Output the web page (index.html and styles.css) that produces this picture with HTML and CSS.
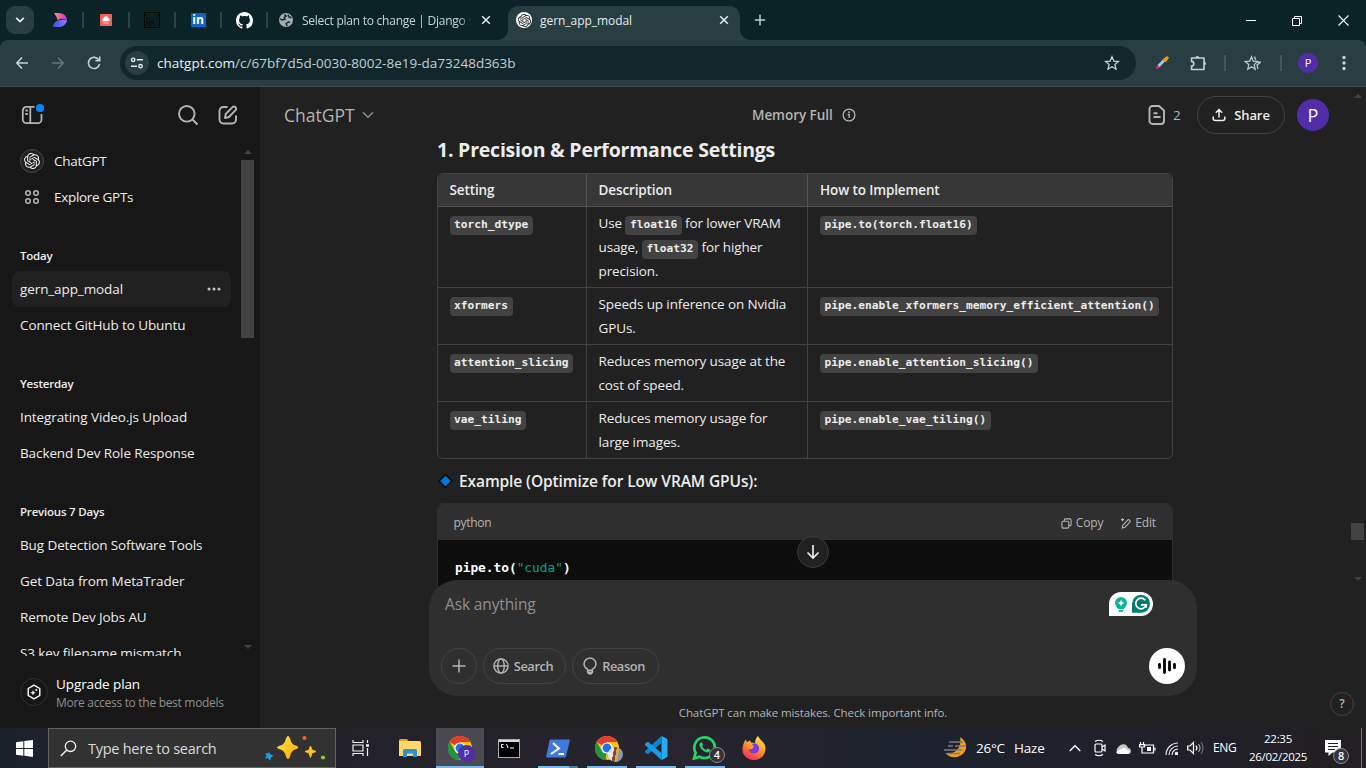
FILE: index.html
```html
<!DOCTYPE html>
<html lang="en">
<head>
<meta charset="utf-8">
<title>gern_app_modal</title>
<link rel="stylesheet" href="styles.css">
</head>
<body>
<svg class="defs" aria-hidden="true">
  <symbol id="openai" viewBox="0 0 24 24"><path fill="currentColor" d="M22.2819 9.8211a5.9847 5.9847 0 0 0-.5157-4.9108 6.0462 6.0462 0 0 0-6.5098-2.9A6.0651 6.0651 0 0 0 4.9807 4.1818a5.9847 5.9847 0 0 0-3.9977 2.9 6.0462 6.0462 0 0 0 .7427 7.0966 5.98 5.98 0 0 0 .511 4.9107 6.051 6.051 0 0 0 6.5146 2.9001A5.9847 5.9847 0 0 0 13.2599 24a6.0557 6.0557 0 0 0 5.7718-4.2058 5.9894 5.9894 0 0 0 3.9977-2.9001 6.0557 6.0557 0 0 0-.7475-7.0729zm-9.022 12.6081a4.4755 4.4755 0 0 1-2.8764-1.0408l.1419-.0804 4.7783-2.7582a.7948.7948 0 0 0 .3927-.6813v-6.7369l2.02 1.1686a.071.071 0 0 1 .038.052v5.5826a4.504 4.504 0 0 1-4.4945 4.4944zm-9.6607-4.1254a4.4708 4.4708 0 0 1-.5346-3.0137l.142.0852 4.783 2.7582a.7712.7712 0 0 0 .7806 0l5.8428-3.3685v2.3324a.0804.0804 0 0 1-.0332.0615L9.74 19.9502a4.4992 4.4992 0 0 1-6.1408-1.6464zM2.3408 7.8956a4.485 4.485 0 0 1 2.3655-1.9728V11.6a.7664.7664 0 0 0 .3879.6765l5.8144 3.3543-2.0201 1.1685a.0757.0757 0 0 1-.071 0l-4.8303-2.7865A4.504 4.504 0 0 1 2.3408 7.872zm16.5963 3.8558L13.1038 8.364 15.1192 7.2a.0757.0757 0 0 1 .071 0l4.8303 2.7913a4.4944 4.4944 0 0 1-.6765 8.1042v-5.6772a.79.79 0 0 0-.407-.667zm2.0107-3.0231l-.142-.0852-4.7735-2.7818a.7759.7759 0 0 0-.7854 0L9.409 9.2297V6.8974a.0662.0662 0 0 1 .0284-.0615l4.8303-2.7866a4.4992 4.4992 0 0 1 6.6802 4.66zM8.3065 12.863l-2.02-1.1638a.0804.0804 0 0 1-.038-.0567V6.0742a4.4992 4.4992 0 0 1 7.3757-3.4537l-.142.0805L8.704 5.459a.7948.7948 0 0 0-.3927.6813zm1.0976-2.3654l2.602-1.4998 2.6069 1.4998v2.9994l-2.5974 1.4997-2.6067-1.4997Z"/></symbol>
  <symbol id="chrome" viewBox="0 0 24 24"><circle cx="12" cy="12" r="12" fill="#fbc116"/><path d="M12 12 1.6 6A12 12 0 0 1 22.4 6H12z" fill="#e33b2e"/><path d="M1.6 6 8 17l4-1-2 8A12 12 0 0 1 1.6 6z" fill="#229342"/><path d="M1.6 6 12 24l-2-.2A12 12 0 0 1 1.6 6z" fill="#229342"/><circle cx="12" cy="12" r="5.6" fill="#fff"/><circle cx="12" cy="12" r="4.4" fill="#1a73e8"/></symbol>
  <symbol id="x" viewBox="0 0 10 10"><path d="M1.2 1.2l7.6 7.6M8.8 1.2 1.2 8.8" stroke="currentColor" stroke-width="1.5" fill="none"/></symbol>
</svg>

<header class="tabs">
  <button class="tabsearch"><svg width="10" height="8" viewBox="0 0 10 8"><path d="M1.2 1.8 5 5.6l3.8-3.8" fill="none" stroke="#e3eced" stroke-width="1.8"/></svg></button>
  <div class="pin"><svg width="14" height="16" viewBox="0 0 14 16"><defs><linearGradient id="g1" x1="0" x2="1"><stop offset="0" stop-color="#f8a05c"/><stop offset=".5" stop-color="#f0589a"/><stop offset="1" stop-color="#b23df0"/></linearGradient><linearGradient id="g2" x1="0" x2="1"><stop offset="0" stop-color="#3b4fe0"/><stop offset="1" stop-color="#8d7bff"/></linearGradient></defs><path d="M1 1h4.500C10.500 1 14 4 14 8.500 10.500 6 6 6.500 4.500 8.500 4.500 5 2 3 1 1z" fill="url(#g1)"/><path d="M0 14.500C0 9 9 5.500 14 8.500c-1 4-4 6.500-8 6.500H1z" fill="url(#g2)"/></svg></div>
  <div class="pin"><svg width="12" height="12" viewBox="0 0 12 12"><rect width="12" height="12" rx="1" fill="#f4645f"/><path d="M3.500 7.200a1.600 1.600 0 0 1 0-3 2.600 2.600 0 0 1 5 0 1.600 1.600 0 0 1 0 3z" fill="#fff"/><path d="M3 9h6" stroke="#fbb" /></svg></div>
  <div class="pin"><svg width="16" height="16" viewBox="0 0 16 16"><rect x=".5" y=".5" width="15" height="15" fill="#0c1f22" stroke="#040505"/><path d="M2 6.500h4M2 9h7M2 11h9M2 13h6" stroke="#060a0b"/></svg></div>
  <div class="pin"><span class="linkedin">in</span></div>
  <div class="pin"><svg width="17" height="17" viewBox="0 0 16 16"><path fill="#fff" d="M8 0C3.580 0 0 3.580 0 8c0 3.540 2.290 6.530 5.470 7.590.4.070.55-.17.55-.38 0-.19-.01-.82-.01-1.490-2.010.37-2.530-.49-2.690-.94-.09-.23-.48-.94-.82-1.130-.28-.15-.68-.52-.01-.53.63-.01 1.080.58 1.230.82.72 1.210 1.870.87 2.330.66.07-.52.28-.87.51-1.070-1.780-.2-3.640-.89-3.640-3.950 0-.87.31-1.590.82-2.150-.08-.2-.36-1.020.08-2.120 0 0 .67-.21 2.200.82.64-.18 1.320-.27 2-.27s1.360.09 2 .27c1.530-1.040 2.200-.82 2.200-.82.44 1.100.16 1.920.08 2.120.51.56.82 1.270.82 2.150 0 3.070-1.870 3.750-3.650 3.950.29.25.54.73.54 1.480 0 1.070-.01 1.930-.01 2.200 0 .21.15.46.55.38A8.010 8.010 0 0 0 16 8c0-4.420-3.580-8-8-8z"/></svg></div>
  <div class="tab"><svg width="14" height="14" viewBox="0 0 14 14"><circle cx="7" cy="7" r="7" fill="#a2acaf"/><path d="M5.500 1.500 7 3.200 5.200 4.500 6 6.300 3.600 7 1.200 6M8 13l-.8-2.400L9.300 9 11 9.500M9 1.700l1 2.300 2.500.5" fill="none" stroke="#15292d" stroke-width="1.500"/></svg><span class="tabname t-dj">Select plan to change | Django s</span><svg class="close" width="10" height="10"><use href="#x"/></svg></div>
  <div class="tab active"><span class="fav"><svg width="13" height="13"><use href="#openai"/></svg></span><span class="tabname">gern_app_modal</span><svg class="close" width="10" height="10"><use href="#x"/></svg></div>
  <svg class="plus" width="12" height="12" viewBox="0 0 12 12"><path d="M6 .8v10.400M.8 6h10.400" stroke="#b9d0d3" stroke-width="1.500"/></svg>
  <div class="winctl">
    <svg width="10" height="11" viewBox="0 0 10 11"><path d="M0 5.500h10" stroke="#fff"/></svg>
    <svg width="10" height="11" viewBox="0 0 10 11"><path d="M.5 3.500h7v7h-7zM2.500 3.500v-2h7v7h-2" fill="none" stroke="#fff"/></svg>
    <svg width="11" height="11" viewBox="0 0 11 11"><path d="M.5.5l10 10M10.500.5l-10 10" stroke="#fff" stroke-width="1.100"/></svg>
  </div>
</header>

<nav class="toolbar">
  <svg width="36" height="16" viewBox="-12 0 36 16"><path d="M12 8H1M6 2.500.8 8 6 13.500" fill="none" stroke="#c3d3d6" stroke-width="1.600"/></svg>
  <svg width="36" height="16" viewBox="-12 0 36 16"><path d="M0 8h11M6 2.500 11.200 8 6 13.500" fill="none" stroke="#66777b" stroke-width="1.600"/></svg>
  <svg width="36" height="16" viewBox="-12 0 36 16"><path d="M10.800 5A5.600 5.600 0 1 0 11.500 9M11.700 1.500v4.300H7.400" fill="none" stroke="#c3d3d6" stroke-width="1.600"/></svg>
  <div class="omni">
    <span class="site"><svg width="14" height="14" viewBox="0 0 14 14" fill="none" stroke="#e3eced" stroke-width="1.400"><circle cx="3.200" cy="3.800" r="1.700"/><path d="M6.800 3.800H13M1 10.200h6"/><circle cx="10.500" cy="10.200" r="1.700"/></svg></span>
    <span class="url"><b>chatgpt.com</b>/c/67bf7d5d-0030-8002-8e19-da73248d363b</span>
    <svg class="bm" width="16" height="16" viewBox="0 0 16 16"><path d="m8 1.700 1.800 4.400 4.700.4-3.600 3.100 1.100 4.600L8 11.700l-4 2.500 1.100-4.600L1.500 6.500l4.700-.4z" fill="none" stroke="#c3d3d6" stroke-width="1.300"/></svg>
  </div>
  <div class="exts">
    <svg width="14" height="14" viewBox="0 0 14 14"><path d="M1.500 12.500 5 9" stroke="#e91e63" stroke-width="2.800"/><path d="M3.500 10 9 4.500" stroke="#8fd0f5" stroke-width="2.800"/><path d="M8 3.500 10.500 6 13.500 1.800 12.300.5z" fill="#ff9800" stroke="#ff9800"/></svg>
    <svg class="e2" width="17" height="17" viewBox="0 0 17 17"><path d="M1.500 3H14v11.500H1.500V11a2.300 2.300 0 0 0 0-4.600z" fill="none" stroke="#c3d3d6" stroke-width="1.600" stroke-linejoin="round"/><path d="M5.500 3a1.900 1.900 0 0 1 3.800 0zM14 6.500a1.900 1.900 0 0 1 0 3.800z" fill="#c3d3d6"/></svg>
    <i class="bar"></i>
    <svg class="e3" width="17" height="16" viewBox="0 0 17 16"><path d="m7.500 1.700 1.700 4.400 4.300.4-3.300 3.100 1 4.600-3.700-2.500-3.700 2.500 1-4.600L1 6.500l4.800-.4zM10.500 1.500l1.200 3.500M12.500 6.800l4 .4-3.500 2.900 1 3.900" fill="none" stroke="#b9c9cc" stroke-width="1.300"/></svg>
    <i class="bar"></i>
    <span class="ava small">P</span>
    <svg class="e4" width="4" height="16" viewBox="0 0 4 16" fill="#c3d3d6"><circle cx="2" cy="2.500" r="1.700"/><circle cx="2" cy="8" r="1.700"/><circle cx="2" cy="13.500" r="1.700"/></svg>
  </div>
</nav>

<main class="page">
  <aside class="side">
    <div class="sidehead">
      <svg width="24" height="24" viewBox="0 0 24 24"><path d="M14.500 3.900H6.500a3.700 3.700 0 0 0-3.700 3.700v8.800a3.700 3.700 0 0 0 3.700 3.700h11.300a3.700 3.700 0 0 0 3.700-3.700V11M10.300 3.900v16.200M5.300 7.500h2.500M5.300 11h2.500" fill="none" stroke="#b4b4b4" stroke-width="1.800"/><circle cx="20" cy="5" r="4.100" fill="#0285ff"/></svg>
      <svg class="s2" width="22" height="22" viewBox="0 0 22 22"><circle cx="9.800" cy="9.800" r="7.800" fill="none" stroke="#b4b4b4" stroke-width="1.900"/><path d="m15.500 15.500 5 5" stroke="#b4b4b4" stroke-width="1.900"/></svg>
      <svg width="20" height="20" viewBox="0 0 20 20"><path d="M9.500 2H5.500A4 4 0 0 0 1.500 6v8.500a4 4 0 0 0 4 4H14a4 4 0 0 0 4-4V10.500M7 13l.7-4L14.500 2.200a2 2 0 0 1 3 0 2 2 0 0 1 0 3L11 12z" fill="none" stroke="#b4b4b4" stroke-width="1.900" stroke-linejoin="round"/></svg>
    </div>
    <div class="history">
      <div class="row nav"><span class="gptring"><svg width="16" height="16"><use href="#openai"/></svg></span>ChatGPT</div>
      <div class="row nav"><span class="ic"><svg width="16" height="16" viewBox="0 0 16 16" fill="none" stroke="#b4b4b4" stroke-width="1.500"><circle cx="4" cy="4" r="2.300"/><circle cx="12" cy="4" r="2.300"/><circle cx="4" cy="12" r="2.300"/><circle cx="12" cy="12" r="2.300"/></svg></span>Explore GPTs</div>
      <h3>Today</h3>
      <div class="row sel">gern_app_modal<svg width="14" height="4" viewBox="0 0 14 4" fill="#c4c4c4"><circle cx="2" cy="2" r="1.500"/><circle cx="7" cy="2" r="1.500"/><circle cx="12" cy="2" r="1.500"/></svg></div>
      <div class="row">Connect GitHub to Ubuntu</div>
      <h3>Yesterday</h3>
      <div class="row">Integrating Video.js Upload</div>
      <div class="row">Backend Dev Role Response</div>
      <h3>Previous 7 Days</h3>
      <div class="row">Bug Detection Software Tools</div>
      <div class="row">Get Data from MetaTrader</div>
      <div class="row">Remote Dev Jobs AU</div>
      <div class="row">S3 key filename mismatch</div>
      <div class="sbar"><i class="up"></i><i class="thumb"></i><i class="down"></i></div>
    </div>
    <div class="upgrade">
      <span class="upic"><svg width="16" height="16" viewBox="0 0 16 16"><path d="M8 1.200 13.800 4.500v7L8 14.800 2.200 11.500v-7z" fill="none" stroke="#fff" stroke-width="1.400" stroke-linejoin="round"/><path d="M7 6l.8 2 2 .8-2 .8L7 11.600l-.8-2-2-.8 2-.8zM10.300 4.300l.4 1.200 1.200.5-1.200.4-.4 1.200-.5-1.200-1.200-.4 1.200-.5z" fill="#fff"/></svg></span>
      <div><p class="u1">Upgrade plan</p><p class="u2">More access to the best models</p></div>
    </div>
  </aside>

  <section class="chat">
    <div class="chathead">
      <span class="model">ChatGPT</span><svg class="chev" width="12" height="8" viewBox="0 0 12 8"><path d="m1 1.300 5 5 5-5" fill="none" stroke="#8f8f8f" stroke-width="1.500"/></svg>
      <span class="mem">Memory Full</span><svg width="14" height="14" viewBox="0 0 14 14"><circle cx="7" cy="7" r="5.900" fill="none" stroke="#b4b4b4" stroke-width="1.300"/><path d="M5.600 6.500H7.200v3.500" fill="none" stroke="#b4b4b4" stroke-width="1.300"/><circle cx="7" cy="4.200" r=".9" fill="#b4b4b4"/></svg>
      <div class="headright">
        <svg width="18" height="20" viewBox="0 0 18 20"><path d="M4.500 1h6.500L16 5.500V16a3 3 0 0 1-3 3H4.500a3 3 0 0 1-3-3V4a3 3 0 0 1 3-3zM5.500 8.200h4M5.500 12h7" fill="none" stroke="#b4b4b4" stroke-width="1.900" stroke-linejoin="round"/></svg><span class="two">2</span>
        <button class="share"><svg width="14" height="14" viewBox="0 0 14 14"><path d="M7 9.500V2M3.800 4.800 7 1.600l3.200 3.200M1.200 8.500v2a2 2 0 0 0 2 2h7.600a2 2 0 0 0 2-2v-2" fill="none" stroke="#ececec" stroke-width="1.500"/></svg>Share</button>
        <span class="ava">P</span>
      </div>
    </div>

    <div class="thread">
      <h2>1. Precision &amp; Performance Settings</h2>
      <table>
        <colgroup><col class="c1"><col class="c2"><col></colgroup>
        <tr><th>Setting</th><th>Description</th><th>How to Implement</th></tr>
        <tr><td><code>torch_dtype</code></td><td>Use <code>float16</code> for lower VRAM<br>usage, <code>float32</code> for higher<br>precision.</td><td><code>pipe.to(torch.float16)</code></td></tr>
        <tr><td><code>xformers</code></td><td>Speeds up inference on Nvidia<br>GPUs.</td><td><code>pipe.enable_xformers_memory_efficient_attention()</code></td></tr>
        <tr><td><code>attention_slicing</code></td><td>Reduces memory usage at the<br>cost of speed.</td><td><code>pipe.enable_attention_slicing()</code></td></tr>
        <tr><td><code>vae_tiling</code></td><td>Reduces memory usage for<br>large images.</td><td><code>pipe.enable_vae_tiling()</code></td></tr>
      </table>
      <p class="ex"><svg width="16" height="16" viewBox="0 0 16 16"><path d="M8.500 1.600 14.900 8 8.500 14.400 2.100 8z" fill="#0078d7" stroke="#0b0b0b" stroke-width="1.500"/></svg>Example (Optimize for Low VRAM GPUs):</p>
      <div class="codeblock">
        <div class="codehead"><span class="lang">python</span>
          <svg class="cp" width="11" height="11" viewBox="0 0 12 12"><path d="M3.500 3V2.500a1.500 1.500 0 0 1 1.500-1.500h4.500A1.500 1.500 0 0 1 11 2.500V7a1.500 1.500 0 0 1-1.500 1.500H9M2.500 3.500H7A1.500 1.500 0 0 1 8.500 5v4.500A1.500 1.500 0 0 1 7 11H2.500A1.500 1.500 0 0 1 1 9.500V5a1.500 1.500 0 0 1 1.500-1.500z" fill="none" stroke="#b4b4b4" stroke-width="1.200"/></svg><span class="cpt">Copy</span>
          <svg class="ed" width="11" height="11" viewBox="0 0 12 12"><path d="m3 8 5-5.500a1.600 1.600 0 0 1 2.500 2.200L5.500 10l-3 .8zM1 1.800h3.500M2.700 0v3.500" fill="none" stroke="#b4b4b4" stroke-width="1.200"/></svg><span>Edit</span></div>
        <pre>pipe.to(<span>"cuda"</span>)</pre>
      </div>
    </div>

    <div class="composer">
      <button class="down"><svg width="14" height="16" viewBox="0 0 14 16"><path d="M7 1v13M1.500 8.500 7 14l5.500-5.500" fill="none" stroke="#ececec" stroke-width="1.700"/></svg></button>
      <div class="ask"><span>Ask anything</span>
        <svg width="44" height="24" viewBox="0 0 44 24"><path d="M0 24V12A12 12 0 0 1 12 0H32a12 12 0 0 1 0 24z" fill="#fff"/><circle cx="12" cy="11" r="6" fill="#0bb59b"/><path d="M9 14h6v3H9zM9.200 18h5.600l-1 1.800h-3.600z" fill="#0bb59b"/><path d="m12 7.500 1 2.500 2.500 1-2.500 1-1 2.500L11 12l-2.500-1 2.500-1z" fill="#fff"/><path d="M23 20.800V12a9 9 0 1 1 9 8.800z" fill="#027e6f"/><path d="M36.200 8.200A5.300 5.300 0 1 0 37.200 12.800H32M37.200 12.500v3.300" fill="none" stroke="#fff" stroke-width="1.700"/></svg>
      </div>
      <div class="tools">
        <button class="pill round"><svg width="14" height="14" viewBox="0 0 14 14"><path d="M7 .5v13M.5 7h13" stroke="#b4b4b4" stroke-width="1.500"/></svg></button>
        <button class="pill p1"><svg width="16" height="16" viewBox="0 0 16 16" fill="none" stroke="#b4b4b4" stroke-width="1.400"><circle cx="8" cy="8" r="7.100"/><ellipse cx="8" cy="8" rx="3.300" ry="7.100"/><path d="M1 8h14"/></svg>Search</button>
        <button class="pill p2"><svg width="14" height="18" viewBox="0 0 14 18" fill="none" stroke="#b4b4b4" stroke-width="1.500"><path d="M4.500 12.300A5.900 5.900 0 1 1 9.500 12.300V14a2.500 2.500 0 0 1-5 0zM4.500 13.300h5"/><path d="M5 15.300h4l-1 1.500H6z" fill="#b4b4b4"/></svg>Reason</button>
        <button class="voice"><svg width="18" height="16" viewBox="0 0 18 16"><path d="M1.500 6.300v3.400M6.500 1.500v13M11.500 4v8M16.500 6.300v3.400" stroke="#000" stroke-width="2.800" stroke-linecap="round"/></svg></button>
      </div>
    </div>
    <p class="foot">ChatGPT can make mistakes. Check important info.</p>
    <span class="help">?</span>
  </section>
  <div class="vscroll"><i class="up"></i><i class="vthumb"></i><i class="down"></i></div>
</main>

<footer class="task">
  <div class="start"><svg width="17" height="17" viewBox="0 0 17 17"><path d="M0 2.300 7.300 1.200V8H0zM8.300 1.100 17 0v8H8.300zM0 9h7.300v6.800L0 14.700zM8.300 9H17v8l-8.700-1.200z" fill="#fff"/></svg></div>
  <div class="tsearch"><svg width="17" height="17" viewBox="0 0 17 17"><circle cx="10.500" cy="6.300" r="5.200" fill="none" stroke="#f2f2f2" stroke-width="1.300"/><path d="M6.800 10 .8 16" stroke="#f2f2f2" stroke-width="1.400"/></svg><span>Type here to search</span>
    <svg class="spark" width="62" height="26" viewBox="0 0 62 26"><defs><linearGradient id="gs" x2="1" y2="1"><stop offset="0" stop-color="#ffe24a"/><stop offset="1" stop-color="#f8a80c"/></linearGradient></defs><path d="M24 1q1.500 0 3 5.500Q28.500 10 33 11q2.500 1 0 3-4.500.8-6 4.500-1.500 5.500-3 5.500t-3-5.500Q19.500 15 15 14q-4-1.500 0-3 4.500-1 6-4.500Q22.500 1 24 1z" fill="url(#gs)"/><path d="m46.500 11 1.500 4 4 1.500-4 1.500-1.500 4.500-1.500-4.500-4-1.500 4-1.500z" fill="url(#gs)" stroke="#fbc21b"/><path d="m5 17 1.500 2.500 3 1-2.500 2-.8 3L4 23.300l-3 .2 1.500-2.800-1.200-2.800 3 .7z" fill="#12a4ea"/><circle cx="40.500" cy="3" r="2.100" fill="#f0622a"/><circle cx="59" cy="22.500" r="2.100" fill="#8bc83f"/></svg></div>
  <div class="slot tv"><svg width="17" height="16" viewBox="0 0 17 16" fill="none" stroke="#f2f2f2" stroke-width="1.200"><path d="M1 0v2.500h10V0M1 5h10v6H1zM1 16v-2.500h10V16M15.500 0v3M15.500 8v8"/><path d="M14 5.500h3" stroke-width="2.500"/></svg></div>
  <div class="slot ex1"><svg width="22" height="18" viewBox="0 0 22 18"><path d="M0 1.500A1.500 1.500 0 0 1 1.500 0H8l2 2.500H0z" fill="#e4a50f"/><path d="M0 2h20.500A1.500 1.500 0 0 1 22 3.500V17H0z" fill="#ffd766"/><path d="M4 18v-6.500A1.500 1.500 0 0 1 5.500 10h11a1.500 1.500 0 0 1 1.500 1.500V18h-4v-3.500H8V18z" fill="#2f8fd8"/></svg></div>
  <div class="slot on"><svg width="24" height="24"><use href="#chrome"/></svg><span class="ava tiny">P</span></div>
  <div class="slot"><svg width="22" height="19" viewBox="0 0 22 19"><rect x=".5" y=".5" width="21" height="18" fill="#000" stroke="#a9adb0"/><path d="M1 2h20" stroke="#d6d9da" stroke-width="2"/><path d="M5.500 5.500h-2v3h2M7 6v.1M7 8v.1M8.500 5l1.500 4M12 9h4" stroke="#fff" fill="none"/></svg></div>
  <div class="slot run multi"><svg width="24" height="19" viewBox="0 0 24 19"><path d="M4.500.5H23a.8.8 0 0 1 .8 1L20 17.500a1.300 1.300 0 0 1-1.300 1H1a.8.8 0 0 1-.8-1L3.500 1.500a1.300 1.300 0 0 1 1-1z" fill="#3f79dd"/><path d="m7 4 6 5.500-8 5.500M12.500 15H18" fill="none" stroke="#fff" stroke-width="2"/></svg></div>
  <div class="slot run"><svg width="24" height="24"><use href="#chrome"/></svg><span class="person"></span></div>
  <div class="slot run"><svg width="24" height="24" viewBox="0 0 24 24"><path d="m17.500 0 6 3v18l-6 3z" fill="#29a9f1"/><path d="M17.500 0v7L4 18.200 1 16.500V15z" fill="#0b84cf"/><path d="M17.500 24v-7L4 5.800 1 7.500V9z" fill="#1a9be6"/></svg></div>
  <div class="slot run"><svg width="25" height="24" viewBox="0 0 25 24"><path d="m2 22.500 1.600-5.800a10.300 10.300 0 1 1 4 4z" fill="none" stroke="#27d366" stroke-width="2.700"/><path d="M8.700 6.500c.8-.6 1.400-.2 1.700.7l.6 1.500c.1.500-.6 1.200-.9 1.600 1 1.700 2.300 2.900 4.100 3.600l1.200-1.400c.5-.4 2.600.8 2.900 1.100.3.700-.7 2.800-2.600 2.900-3.300.1-7.900-4-8.300-7.200 0-1.200.7-2.300 1.300-2.800z" fill="#27d366"/></svg><span class="badge four">4</span></div>
  <div class="slot"><svg width="24" height="24" viewBox="0 0 24 24"><defs><linearGradient id="ff" x1=".8" y1="0" x2=".3" y2="1"><stop offset="0" stop-color="#fff04a"/><stop offset=".5" stop-color="#ff9322"/><stop offset="1" stop-color="#f5265c"/></linearGradient></defs><path d="M16 0c1 3 6 6 7 9.500 2 7-2.500 14-10.500 14.500C5 24 0 19 .5 12.500.8 8 2.500 6 3.500 3.500L5 6l3-1.500 1 2 4 .5C13 4 14 2 16 0z" fill="url(#ff)"/><path d="M9 8.500c5-2.500 8.500.5 8 5-.5 3.500-5.500 5.500-8.500 3-1.800-1.500-1.500-3-1-3.500 1.500.5 3 0 4-1.500L8 10z" fill="#7a3be0"/><path d="M5 6.500 9 7l3 3.500c-1.500 2-3 2.500-4.500 2.500L4.500 10z" fill="#ff9a2a"/></svg></div>
  <div class="tray">
    <svg class="moon" width="24" height="22" viewBox="0 0 24 22"><path d="M16 0c6 4 8 9 4.500 15-4 6-14 7.500-19 1 7 2 17-3 14.500-16z" fill="#f59a1b"/><path d="M5 5h14M4 9h5M11 9h11M0 13h18M3 16.500h13" stroke="#7b7d82" stroke-width="1.700"/></svg>
    <span class="temp">26°C</span><span class="haze">Haze</span>
    <svg class="t1" width="12" height="8" viewBox="0 0 12 8"><path d="m.7 7 5.300-5.300L11.300 7" fill="none" stroke="#fff" stroke-width="1.300"/></svg>
    <svg class="t2" width="13" height="18" viewBox="0 0 13 18" fill="none" stroke="#fff" stroke-width="1.200"><rect x="2" y="5" width="7" height="8" rx="1"/><path d="M9 8l3-2v6L9 10M2 2.500q4-2.500 8 0M2 15.500q4 2.500 8 0"/></svg>
    <svg class="t3" width="16" height="11" viewBox="0 0 16 11"><path d="M4 11a4 4 0 0 1-.5-7A5.200 5.200 0 0 1 13 5a3 3 0 0 1-.3 6z" fill="#c9c9c9"/><path d="M1 9 9 4.500 15.500 9A3 3 0 0 1 12.700 11H4a4 4 0 0 1-3-2z" fill="#fff"/></svg>
    <svg class="t4" width="17" height="14" viewBox="0 0 17 14"><path d="M6 4h8.500v8H5M16 6.500v3M1.500 4.500V1M4.500 4.500V1M.5 3.500h5v2.500H.5zM3 6v6H5" fill="none" stroke="#fff" stroke-width="1.200"/><rect x="8" y="6" width="4" height="4" fill="#fff"/></svg>
    <svg class="t5" width="13" height="13" viewBox="0 0 13 13" fill="none" stroke="#e8e8e8" stroke-width="1.200"><path d="M1 13A12 12 0 0 1 13 1M4 13a9 9 0 0 1 9-9M7 13a6 6 0 0 1 6-6" /><circle cx="11.500" cy="11.500" r="1.200" fill="#fff"/></svg>
    <svg class="t6" width="17" height="14" viewBox="0 0 17 14" fill="none" stroke="#fff" stroke-width="1.200"><path d="M.7 5H3l3.500-3.500v11L3 9H.7zM9 4.700q1.800 2.300 0 4.600"/><path d="M11.500 3q3 4 0 8" stroke="#a5a5a8"/><path d="M14 1q4 6 0 12" stroke="#6b6b70"/></svg>
    <span class="eng">ENG</span>
    <div class="clock"><span>22:35</span><span class="date">26/02/2025</span></div>
    <div class="note"><svg width="16" height="17" viewBox="0 0 16 17"><path d="M0 0h16v12.500H7.500L3.500 16v-3.500H0z" fill="#fff"/><path d="M3 3.500h10M3 6.500h10M3 9.500h7" stroke="#222129"/></svg><span class="badge">8</span></div>
    <i class="desk"></i>
  </div>
</footer>
</body>
</html>
```
FILE: styles.css
```css
* { box-sizing: border-box; }
body { margin: 0; width: 1366px; height: 768px; overflow: hidden; display: flex; flex-direction: column; background: #212121; font: 13px/20px "Open Sans", "Noto Sans", sans-serif; color: #ececec; white-space: nowrap; }
p, h2, h3, pre { margin: 0; }
button { font: inherit; color: inherit; background: none; border: 0; padding: 0; display: flex; align-items: center; justify-content: center; }
svg { flex: none; display: block; }
.defs { position: absolute; width: 0; height: 0; }

/* tab strip */
.tabs { position: relative; height: 40px; flex: none; background: #0b2327; display: flex; align-items: center; }
.tabsearch { width: 28px; height: 28px; margin: 0 4px 0 6px; border-radius: 9px; background: #293e43; }
.pin { width: 46px; height: 16px; border-right: 2px solid #2b4146; display: flex; align-items: center; justify-content: center; }
.linkedin { width: 15px; height: 14px; border-radius: 1px; background: #0a66c2; color: #fff; font: bold 12px/14px "Open Sans", sans-serif; text-align: center; }
.tab { width: 240px; height: 34px; padding: 0 17px 0 11px; display: flex; align-items: center; color: #c5d6d8; font-size: 12px; }
.tabname { flex: 1; min-width: 0; margin-left: 8px; padding-top: 1px; letter-spacing: -.28px; }
.t-dj { overflow: hidden; letter-spacing: -.25px; -webkit-mask-image: linear-gradient(90deg, #000 92%, transparent 99%); mask-image: linear-gradient(90deg, #000 92%, transparent 99%); margin-right: 8px; margin-left: 9px; }
.tab .close { color: #e3eced; }
.active { position: relative; z-index: 1; align-self: flex-end; width: 232px; padding: 0 11px 6px 8px; border-radius: 10px 10px 0 0; background: #293e43; color: #e3eced; }
.active .tabname { letter-spacing: -.05px; }
.active::before, .active::after { content: ""; position: absolute; bottom: 0; width: 10px; height: 10px; }
.active::before { left: -10px; background: radial-gradient(circle at 0 0, transparent 9.500px, #293e43 10px); }
.active::after { right: -10px; background: radial-gradient(circle at 100% 0, transparent 9.500px, #293e43 10px); }
.fav { width: 16px; height: 16px; border-radius: 50%; background: #fff; color: #222; display: flex; align-items: center; justify-content: center; }
.plus { margin-left: 14px; }
.winctl { margin-left: auto; padding-right: 17px; display: flex; gap: 36px; }

/* toolbar */
.toolbar { height: 47px; flex: none; display: flex; align-items: center; padding-left: 4px; background: #293e43; border-bottom: 1px solid #3c4c50; border-radius: 8px 8px 0 0; box-shadow: 0 -8px 0 #0b2327; }
.omni { width: 1016px; height: 34px; margin-left: 8px; padding: 0 16px 0 5px; border-radius: 17px; background: #12272c; display: flex; align-items: center; }
.site { width: 24px; height: 24px; border-radius: 50%; background: #293e43; display: flex; align-items: center; justify-content: center; }
.url { margin-left: 8px; flex: 1; font-size: 13.500px; letter-spacing: 0; color: #c3cfd1; }
.url b { font-weight: 400; color: #e8f0f1; }
.exts { flex: 1; display: flex; align-items: center; padding-left: 19px; }
.e2 { margin: 0 17px 0 21px; }
.e3 { margin: 0 19px 0 18px; }
.e4 { margin-left: 24px; }
.bar { width: 2px; height: 16px; background: #43585d; }
.ava { width: 32px; height: 32px; border-radius: 50%; background: #512da8; color: #fff; font: 18px/32px "Open Sans", sans-serif; text-align: center; }
.ava.small { width: 20px; height: 20px; margin-left: 16px; font-size: 11px; line-height: 20px; }

/* page */
.page { flex: 1; min-height: 0; display: flex; }
.side { width: 260px; flex: none; background: #171717; display: flex; flex-direction: column; }
.sidehead { height: 56px; flex: none; display: flex; align-items: center; padding: 0 22px 0 20px; gap: 19px; }
.sidehead .s2 { margin-left: auto; }
.history { position: relative; height: 513px; flex: none; overflow: hidden; padding-left: 12px; }
.row { width: 219px; height: 36px; padding: 0 10px 0 8px; border-radius: 8px; display: flex; align-items: center; font-size: 13.500px; letter-spacing: -.1px; }
.nav { letter-spacing: -.3px; }
.row.sel { background: #212121; justify-content: space-between; }
.gptring, .ic { width: 24px; height: 24px; margin-right: 10px; display: flex; align-items: center; justify-content: center; }
.gptring { border: 1px solid #4a4a4a; border-radius: 50%; background: #212121; }
.history h3 { height: 30px; margin: 26px 0 0 8px; font-size: 11.500px; line-height: 30px; font-weight: 600; letter-spacing: -.2px; }
.sbar { position: absolute; right: 6px; top: 0; width: 13px; height: 513px; display: flex; flex-direction: column; align-items: center; padding: 7px 0; }
.up, .down { border: 4px solid transparent; margin-right: 0; }
i.up { border-top: 0; border-bottom-color: #424242; }
i.down { border-bottom: 0; border-top-color: #424242; margin-top: auto; }
.thumb { width: 13px; height: 178px; margin-top: 6px; background: #424242; }
.upgrade { flex: 1; display: flex; align-items: center; padding-left: 20px; gap: 8px; }
.upic { width: 28px; height: 28px; border: 1px solid #303030; border-radius: 50%; display: flex; align-items: center; justify-content: center; }
.u1 { font-size: 13.500px; line-height: 20px; color: #fff; letter-spacing: -.1px; }
.u2 { font-size: 12px; line-height: 17px; color: #8f8f8f; letter-spacing: -.3px; }

.chat { width: 1091px; flex: none; display: flex; flex-direction: column; position: relative; }
.chathead { height: 56px; flex: none; display: flex; align-items: center; padding-left: 24px; }
.model { width: 78px; font-size: 17.500px; font-weight: 500; color: #b4b4b4; letter-spacing: 0; }
.mem { margin: 0 9px 0 378px; width: 81px; font-size: 13.500px; font-weight: 600; color: #b4b4b4; letter-spacing: -.05px; }
.headright { margin-left: auto; display: flex; align-items: center; padding-right: 22px; }
.two { width: 10px; margin: 0 14px 0 7px; color: #b4b4b4; font-size: 13.500px; }
.share { width: 88px; height: 38px; margin-right: 12px; border: 1px solid #424242; border-radius: 19px; gap: 8px; font-size: 13px; font-weight: 600; letter-spacing: -.1px; }
.thread { height: 465px; flex: none; overflow: hidden; width: 736px; margin-left: 177px; }
h2 { height: 30px; line-height: 14px; font-size: 19.500px; font-weight: 700; letter-spacing: -.22px; }
table { width: 736px; table-layout: fixed; border-collapse: separate; border-spacing: 0; border: 1px solid #424242; border-radius: 6px; overflow: hidden; }
.c1 { width: 149px; }
.c2 { width: 221px; }
th, td { padding: 4px 11.500px; border-right: 1px solid #424242; border-bottom: 1px solid #424242; text-align: left; vertical-align: top; font-size: 13.500px; line-height: 24px; letter-spacing: -.12px; }
th { background: #373737; border-color: #545454; font-weight: 600; letter-spacing: -.12px; }
th:last-child, td:last-child { border-right: 0; padding-left: 12px; }
tr:last-child td { border-bottom: 0; }
code { display: inline-block; height: 19px; padding: 0 4.600px; border-radius: 4px; background: #424242; font: bold 11.200px/18px "DejaVu Sans Mono", monospace; letter-spacing: 0; vertical-align: 0; }
.ex { height: 44px; display: flex; align-items: center; gap: 6px; font-size: 15.500px; font-weight: 600; letter-spacing: -.1px; }
.codeblock { height: 160px; border: 1px solid #2f2f2f; border-radius: 6px; background: #0d0d0d; overflow: hidden; }
.codehead { height: 36px; display: flex; align-items: center; padding: 2px 16px 0 15.500px; background: #2f2f2f; color: #b4b4b4; font-size: 12px; letter-spacing: -.15px; }
.lang { letter-spacing: -.3px; }
.codehead .cp { margin-left: auto; }
.codehead svg { margin-right: 4px; }
.cpt { margin-right: 17px; }
pre { padding: 16px 17px; font: bold 12.800px/24px "DejaVu Sans Mono", monospace; color: #fff; }
pre span { color: #00a67d; font-weight: 400; }

.composer { position: relative; margin: -28px 0 0 169px; width: 768px; height: 116px; flex: none; border-radius: 28px; background: #2f2f2f; }
.composer .down { position: absolute; left: 368px; top: -44px; width: 32px; height: 32px; margin: 0; border: 1px solid #3c3c3c; border-radius: 50%; background: #212121; }
.ask { display: flex; justify-content: space-between; padding: 12px 44px 0 16px; height: 68px; color: #8f8f8f; font-size: 15.500px; line-height: 25px; letter-spacing: -.13px; }
.tools { display: flex; padding: 0 12px; gap: 6px; }
.pill { height: 36px; border: 1px solid #424242; border-radius: 18px; color: #b4b4b4; font-size: 12.800px; font-weight: 600; letter-spacing: -.4px; gap: 5px; }
.round { width: 36px; }
.p1 { width: 83px; padding-right: 3px; }
.p2 { width: 87px; padding-right: 3px; }
.voice { margin-left: auto; width: 36px; height: 36px; border-radius: 50%; background: #fff; }
.foot { margin-left: 10px; width: 1086px; text-align: center; font-size: 11.500px; line-height: 33px; color: #b4b4b4; letter-spacing: -.1px; }
.help { position: absolute; left: 1070px; bottom: 12px; width: 24px; height: 24px; border: 1px solid #424242; border-radius: 50%; text-align: center; font-size: 12px; font-weight: 600; line-height: 22px; color: #b4b4b4; }
.vscroll { width: 13px; display: flex; flex-direction: column; align-items: center; padding: 7px 0 147px; }
.vthumb { width: 13px; height: 17px; background: #424242; margin-top: 425px; }

/* taskbar */
.task { height: 40px; flex: none; display: flex; align-items: center; background: linear-gradient(90deg, #1b212b, #23212a 25%, #27242d 50%, #1c222e 66%, #20202a 85%, #231f22); }
.start { width: 48px; padding-left: 16px; }
.tsearch { width: 288px; height: 40px; border: 1px solid #636363; background: #323232; display: flex; align-items: center; padding: 0 9px 0 11px; color: #dcdcdc; font-size: 14.500px; letter-spacing: -.26px; }
.tsearch span { margin-left: 11px; padding-top: 1px; flex: 1; }
.slot { position: relative; width: 49px; height: 40px; display: flex; align-items: center; justify-content: center; }
.tv { width: 48px; }
.ex1 { margin-left: 2px; width: 50px; padding-right: 2px; }
.on { background: #4b4a52; width: 48px; }
.on::after, .run::after { content: ""; position: absolute; left: 5px; right: 4px; bottom: 0; height: 2px; background: #76b9ed; }
.on::after { left: 0; right: 0; }
.multi::after { background: linear-gradient(90deg, #76b9ed 31px, #4f7ca3 31px); }
.tiny { position: absolute; left: 22px; top: 17px; width: 17px; height: 17px; font-size: 9px; line-height: 17px; }
.person { position: absolute; left: 26px; top: 19px; width: 15px; height: 15px; border-radius: 50%; background: linear-gradient(100deg, #e8e4ea 35%, #7a4b3c 36% 50%, #d9a848 51% 65%, #8b97a5 66%); }
.badge { position: absolute; width: 16px; height: 16px; border-radius: 50%; border: 1px solid #8a8a8e; background: #33333a; color: #fff; font: 600 11px/14px "Open Sans", sans-serif; text-align: center; }
.four { left: 29px; top: 19px; }
.tray { flex: 1; display: flex; align-items: center; padding-left: 166px; font-size: 13.500px; color: #fff; letter-spacing: -.2px; height: 40px; }
.temp { margin-left: 8px; width: 38px; }
.haze { width: 31px; }
.t1 { margin-left: 24px; }
.t2 { margin-left: 12px; }
.t3 { margin-left: 9px; }
.t4 { margin-left: 8px; }
.t5 { margin-left: 9px; }
.t6 { margin-left: 9px; }
.eng { margin-left: 9px; width: 24px; font-size: 12px; letter-spacing: -.4px; }
.clock { width: 60px; margin-left: 11px; display: flex; flex-direction: column; align-items: center; font-size: 11.500px; line-height: 18px; letter-spacing: -.3px; }
.note { position: relative; margin-left: 17px; }
.note .badge { left: 8px; top: 8px; }
.desk { margin-left: auto; width: 1px; height: 40px; background: #77777a; margin-right: 4px; }
```
